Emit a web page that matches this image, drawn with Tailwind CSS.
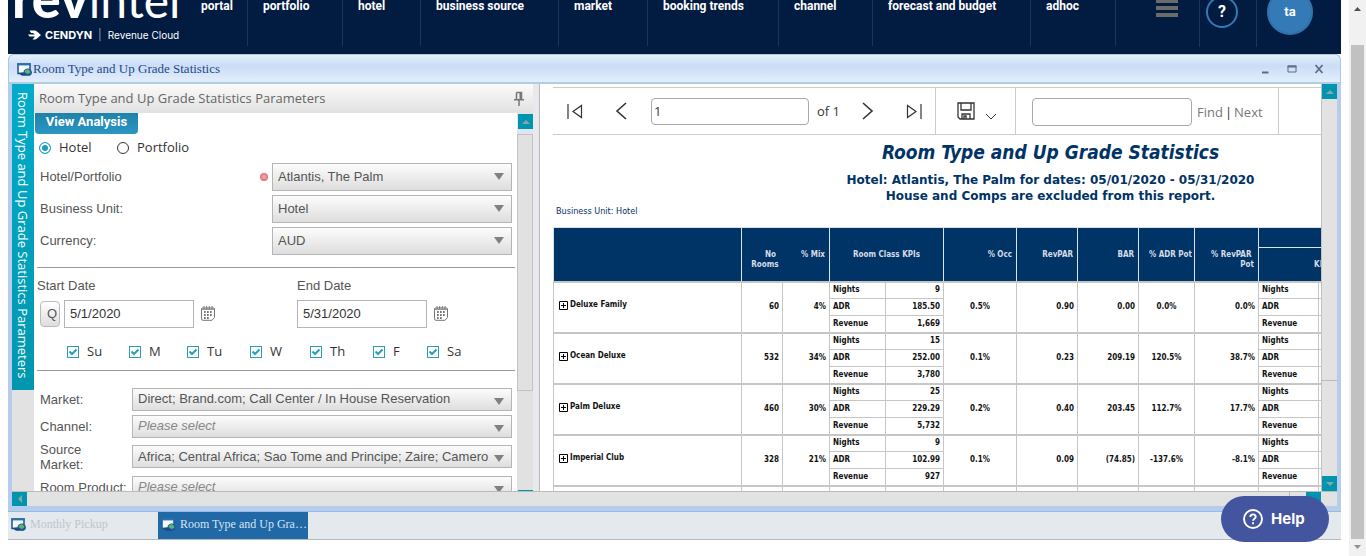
<!DOCTYPE html>
<html lang="en">
<head>
<meta charset="utf-8">
<title>Room Type and Up Grade Statistics</title>
<script src="https://cdn.jsdelivr.net/npm/@tailwindcss/browser@4"></script>
</head>
<body class="relative flex h-screen overflow-hidden bg-white font-['Liberation_Sans',sans-serif] text-[13px] text-[#555]">
<svg class="hidden" aria-hidden="true">
  <symbol id="report" viewBox="0 0 15 13">
    <path d="M1 1h12v9.500H1z" fill="#f4f9fd" stroke="#1f5f9e" stroke-width="1.600"/>
    <path d="M.2.200h13.600v2.200H.2z" fill="#2a6fae"/>
    <path d="M1 10l4 2.800h8L9 9z" fill="#1b4b82"/>
    <path d="M6.500 9.500c0-3 2.500-4 4.500-4s4 2 4 4-1.500 3.300-3.500 3.300z" fill="#1f5c9a"/>
    <path d="M7.500 9c1-3 3.500-3.500 5-1.500l1 2-3 1.500z" fill="#5fb56c"/>
  </symbol>
  <symbol id="calendar" viewBox="0 0 14 15">
    <path d="M1.500 2h11a1 1 0 0 1 1 1v8.500l-2.500 2.800H2a1.500 1.500 0 0 1-1.500-1.500V3a1 1 0 0 1 1-1z" fill="#fff" stroke="#777"/>
    <path d="M1 2.500h12v1.500H1z" fill="#999"/>
    <path d="M3 0v3M5.700 0v3M8.300 0v3M11 0v3" stroke="#777"/>
    <path d="M3 5h1.700v2H3zM6 5h1.700v2H6zM9 5h1.700v2H9zM3 8h1.700v2H3zM6 8h1.700v2H6zM9 8h1.700v2H9zM6 11h1.700v2H6zM3 11h1.700v2H3z" fill="#777"/>
  </symbol>
  <symbol id="check" viewBox="0 0 12 12"><path d="M2.500 5.500l2.500 2.500 4.500-4.500" fill="none" stroke="#2b9db5" stroke-width="2"/></symbol>
  <symbol id="down" viewBox="0 0 10 7"><path d="M0 0h10L5 7z" fill="#808080"/></symbol>
</svg>

<div class="flex min-w-0 flex-1 flex-col px-2">
  <header class="flex h-[54px] shrink-0 overflow-hidden bg-[#021b41] font-['Roboto',sans-serif] text-xs leading-3 font-bold text-white">
    <div class="flex w-[193px] shrink-0 flex-col pl-[4px]">
      <div class="flex h-[22px] items-end overflow-hidden font-['Lato',sans-serif]"><div class="text-[54px] leading-[44px] whitespace-nowrap"><span class="font-black">rev</span><span class="text-[48px] font-normal">intel</span></div></div>
      <div class="mt-[7px] flex h-3 items-center gap-1 pl-4 font-['Inter',sans-serif] text-[11px] leading-3">
        <svg class="h-3 w-[13px]" viewBox="0 0 13 12" fill="#fff"><path d="M1.500 1.500h5c2 0 3 1.500 6.500 4.500-3.500 3-4.500 4.500-6.500 4.500h-2l2.500-3H1.500L0 5.500h7L5 4H3z"/></svg>
        <span class="font-bold">CENDYN</span>
        <span class="px-[2px] font-normal text-slate-400">|</span>
        <span class="text-[10px] font-normal">Revenue Cloud</span>
      </div>
    </div>
    <nav class="flex h-[46px] min-w-0 flex-1 [&>a]:shrink-0 [&>a]:border-r [&>a]:border-[#1f3557] [&>a]:pl-[15px]">
      <a href="#" class="w-[47px] pl-0!">portal</a>
      <a href="#" class="w-[95px]">portfolio</a>
      <a href="#" class="w-[78px]">hotel</a>
      <a href="#" class="w-[138px]">business source</a>
      <a href="#" class="w-[89px]">market</a>
      <a href="#" class="w-[131px]">booking trends</a>
      <a href="#" class="w-[94px]">channel</a>
      <a href="#" class="w-[158px]">forecast and budget</a>
      <a href="#" class="w-[85px]">adhoc</a>
    </nav>
    <div class="flex h-[47px] shrink-0">
      <button aria-label="Menu" class="flex w-[85px] flex-col items-start justify-start gap-[3px] border-r border-[#1f3557] pl-[41px]"><i class="h-[3px] w-[22px] bg-[#6b6b6b]"></i><i class="h-1 w-[22px] bg-[#6b6b6b]"></i><i class="h-1 w-[22px] bg-[#6b6b6b]"></i></button>
      <div class="w-[57px] border-r border-[#1f3557] pl-[6px]"><button class="-mt-1 size-8 rounded-full border-2 border-[#337ab7] text-base">?</button></div>
      <div class="w-[84px] pl-[10px]"><button class="-mt-[11px] size-[46px] rounded-full border-2 border-[#2f72ac] bg-[#337ab7] text-[13px]">ta</button></div>
    </div>
  </header>

  <section class="flex h-[457px] shrink-0 flex-col rounded-t-md bg-[#b7cbec]">
    <div class="flex h-[30px] shrink-0 items-center rounded-t-md border border-[#a9c8e8] border-b-2 border-b-[#b0cde6] bg-linear-to-b from-[#e3effb] via-[#cbdcf6] via-40% to-[#e2effc] pt-px pr-4 pl-2">
      <svg class="h-[13px] w-[15px]"><use href="#report"/></svg>
      <h1 class="pl-px font-['Liberation_Serif',serif] text-[13px] text-[#1d4a8a]">Room Type and Up Grade Statistics</h1>
      <div class="ml-auto flex items-center gap-[17px] text-[#5a6f87]">
        <button aria-label="Minimize" class="size-[10px]"><svg viewBox="0 0 10 10"><path d="M2 7.500h6.500v2H2z" fill="currentColor"/></svg></button>
        <button aria-label="Restore" class="size-[10px]"><svg viewBox="0 0 10 10"><path d="M1 2h8v6H1z" fill="none" stroke="currentColor"/><path d="M.5 1.500h9v2h-9z" fill="currentColor"/></svg></button>
        <button aria-label="Close" class="size-[10px]"><svg viewBox="0 0 10 10"><path d="M1.500 1l7 8M8.500 1l-7 8" fill="none" stroke="currentColor" stroke-width="1.800"/></svg></button>
      </div>
    </div>

    <div class="mx-1 flex h-[407px] shrink-0 bg-[#e2e2e2]">
      <div class="w-[22px] shrink-0"><button class="flex h-[306px] w-full items-start justify-start bg-linear-to-b from-[#02abc8] to-[#0097ae] pt-2 font-['Open_Sans',sans-serif] text-[13px] leading-[22px] whitespace-nowrap text-white [writing-mode:vertical-rl]">Room Type and Up Grade Statistics Parameters</button></div>

      <aside class="flex w-[499px] shrink-0 flex-col bg-white">
        <div class="flex h-[29px] shrink-0 items-center justify-between bg-linear-to-b from-[#fbfbfb] to-[#e1e1e1] pr-2 pl-[5px]">
          <h2 class="font-['Open_Sans',sans-serif] text-[13px] text-[#666]">Room Type and Up Grade Statistics Parameters</h2>
          <button aria-label="Pin" class="h-4 w-3"><svg viewBox="0 0 12 16" fill="none" stroke="#777" stroke-width="1.500"><path d="M3.500 1.500h5v7M3.500 1.500v7M1 8.700h10M6 9v6"/><path d="M7.500 2v6" stroke-width="2"/></svg></button>
        </div>
        <div class="flex min-h-0 flex-1">
          <form class="flex min-w-0 flex-1 flex-col overflow-hidden" onsubmit="return false">
            <button class="ml-px h-[21px] w-[103px] shrink-0 rounded-b-sm bg-linear-to-b from-[#1f82a8] to-[#2a96c2] pb-1 font-['Roboto',sans-serif] font-bold leading-4 text-white">View Analysis</button>
            <div class="flex h-[27px] shrink-0 items-center pl-[5px] font-['Open_Sans',sans-serif] text-[13px] text-[#333]">
              <label class="flex w-[78px] items-center gap-2"><input type="radio" name="scope" checked class="size-3 appearance-none rounded-full border border-[#2b9db5] checked:border-[#2b9db5] checked:bg-[#16a0bc] checked:shadow-[inset_0_0_0_2px_#fff]">Hotel</label>
              <label class="flex items-center gap-2"><input type="radio" name="scope" class="size-3 appearance-none rounded-full border border-[#333]">Portfolio</label>
            </div>
            <div class="grid shrink-0 grid-cols-[1fr_240px] gap-y-1 pt-[2px] pr-[5px] pl-[6px] [&_label]:self-center [&_select]:block [&_select]:h-7 [&_select]:w-full [&_select]:appearance-none [&_select]:border [&_select]:border-[#b5b5b5] [&_select]:bg-linear-to-b [&_select]:from-[#fcfcfc] [&_select]:to-[#dedede] [&_select]:pl-[5px]">
              <label for="hotel" class="flex items-center justify-between pr-1">Hotel/Portfolio<i class="size-2 rounded-full bg-radial from-[#f3b0b0] to-[#d8505c]"></i></label>
              <div class="relative"><select id="hotel"><option>Atlantis, The Palm</option></select><svg class="pointer-events-none absolute top-[10px] right-2 h-[7px] w-[10px]"><use href="#down"/></svg></div>
              <label for="unit">Business Unit:</label>
              <div class="relative"><select id="unit"><option>Hotel</option></select><svg class="pointer-events-none absolute top-[10px] right-2 h-[7px] w-[10px]"><use href="#down"/></svg></div>
              <label for="currency">Currency:</label>
              <div class="relative"><select id="currency"><option>AUD</option></select><svg class="pointer-events-none absolute top-[10px] right-2 h-[7px] w-[10px]"><use href="#down"/></svg></div>
            </div>
            <hr class="mt-3 mr-[2px] ml-[3px] shrink-0 border-[#999]">
            <div class="grid shrink-0 grid-cols-[260px_1fr] pt-2 pl-[3px]">
              <label for="start">Start Date</label>
              <label for="end">End Date</label>
              <div class="flex items-center pt-1 pl-[3px]">
                <button class="h-[26px] w-5 rounded-sm border border-[#bbb] bg-linear-to-b from-white to-[#ddd] pl-1">Q</button>
                <input id="start" value="5/1/2020" class="ml-1 h-7 w-[130px] border border-[#b5b5b5] px-[5px] text-[#333]">
                <svg class="ml-[7px] h-[15px] w-[14px]"><use href="#calendar"/></svg>
              </div>
              <div class="flex items-center pt-1">
                <input id="end" value="5/31/2020" class="h-7 w-[130px] border border-[#b5b5b5] px-[5px] text-[#333]">
                <svg class="ml-[7px] h-[15px] w-[14px]"><use href="#calendar"/></svg>
              </div>
            </div>
            <div class="flex h-[42px] shrink-0 items-center pt-[6px] pl-[33px] font-['Open_Sans',sans-serif] text-[13px] text-[#333] [&_input]:size-3 [&_input]:appearance-none [&_input]:border [&_input]:border-[#2b9db5] [&_label]:flex [&_label]:items-center [&_label]:gap-2 [&_label]:relative [&_svg]:pointer-events-none [&_svg]:absolute [&_svg]:left-0 [&_svg]:size-3">
              <label class="w-[62px]"><input type="checkbox" checked><svg><use href="#check"/></svg>Su</label>
              <label class="w-[58px]"><input type="checkbox" checked><svg><use href="#check"/></svg>M</label>
              <label class="w-[63px]"><input type="checkbox" checked><svg><use href="#check"/></svg>Tu</label>
              <label class="w-[60px]"><input type="checkbox" checked><svg><use href="#check"/></svg>W</label>
              <label class="w-[63px]"><input type="checkbox" checked><svg><use href="#check"/></svg>Th</label>
              <label class="w-[54px]"><input type="checkbox" checked><svg><use href="#check"/></svg>F</label>
              <label><input type="checkbox" checked><svg><use href="#check"/></svg>Sa</label>
            </div>
            <hr class="mr-[2px] ml-[3px] shrink-0 border-[#999]">
            <div class="grid shrink-0 grid-cols-[92px_1fr] items-center pt-[15px] pr-[5px] pl-[6px] [&_label]:leading-[15px] [&_select]:block [&_select]:h-[23px] [&_select]:w-full [&_select]:appearance-none [&_select]:border [&_select]:border-[#b5b5b5] [&_select]:bg-linear-to-b [&_select]:from-[#fcfcfc] [&_select]:to-[#dedede] [&_select]:pr-[22px] [&_select]:pl-[5px]">
              <label for="market">Market:</label>
              <div class="relative py-[2px]"><select id="market"><option>Direct; Brand.com; Call Center / In House Reservation</option></select><svg class="pointer-events-none absolute top-[12px] right-2 h-[7px] w-[10px]"><use href="#down"/></svg></div>
              <label for="channel">Channel:</label>
              <div class="relative py-[2px]"><select id="channel" class="text-[#888] italic"><option>Please select</option></select><svg class="pointer-events-none absolute top-[12px] right-2 h-[7px] w-[10px]"><use href="#down"/></svg></div>
              <label for="source" class="py-[2px]">Source<br>Market:</label>
              <div class="relative py-[2px]"><select id="source"><option>Africa; Central Africa; Sao Tome and Principe; Zaire; Camero</option></select><svg class="pointer-events-none absolute top-[12px] right-2 h-[7px] w-[10px]"><use href="#down"/></svg></div>
              <label for="product" class="whitespace-nowrap">Room Product:</label>
              <div class="relative py-[2px]"><select id="product" class="text-[#888] italic"><option>Please select</option></select><svg class="pointer-events-none absolute top-[12px] right-2 h-[7px] w-[10px]"><use href="#down"/></svg></div>
            </div>
          </form>
          <div class="flex w-4 shrink-0 flex-col bg-[#dfe5ee] pl-px">
            <div class="mt-px flex h-[15px] items-center justify-center bg-[#0095ae]"><svg class="h-1 w-2" viewBox="0 0 8 4"><path d="M0 4h8L4 0z" fill="#8aa5aa"/></svg></div>
            <div class="mt-[5px] -ml-px h-[257px] border border-[#c2c2c2] bg-[#e1e1e1]"></div>
            <div class="-ml-px flex-1 bg-[#e1e1e1]"></div>
            <div class="h-px bg-[#0095ae]"></div>
          </div>
        </div>
      </aside>

      <div class="w-[7px] shrink-0 border-r border-[#b8b8b8] bg-[#e8e9ec]"></div>

      <main class="min-w-0 flex-1 overflow-hidden bg-white pt-[3px] pl-[13px] text-[#333]">
        <div class="flex h-12 w-full items-center border-y border-[#ccc] font-['Open_Sans',sans-serif] [&_svg]:fill-none [&_svg]:stroke-[#333]">
          <button aria-label="First page" class="ml-[14px]"><svg class="h-[15px] w-4" viewBox="0 0 16 15" stroke-width="1.200"><path d="M1 0v15M14.500 1.500v12L6 7.500z"/></svg></button>
          <button aria-label="Previous page" class="ml-8"><svg class="h-[18px] w-3" viewBox="0 0 12 18" stroke-width="1.600"><path d="M11 1L2 9l9 8"/></svg></button>
          <input aria-label="Page" value="1" class="ml-6 h-[27px] w-[158px] rounded border border-[#aaa] px-[2px]">
          <span class="ml-2 w-[37px] pt-px">of 1</span>
          <button aria-label="Next page" class="ml-2"><svg class="h-[18px] w-3" viewBox="0 0 12 18" stroke-width="1.600"><path d="M1 1l9 8-9 8"/></svg></button>
          <button aria-label="Last page" class="ml-8"><svg class="h-[15px] w-4" viewBox="0 0 16 15" stroke-width="1.200"><path d="M15 0v15M1.500 1.500v12L10 7.500z"/></svg></button>
          <div class="ml-[13px] flex h-full w-[81px] items-center border-x border-[#ccc] pl-[21px]">
            <button aria-label="Export" class="flex items-end gap-[10px]"><svg class="size-[18px]" viewBox="0 0 18 18" stroke-width="1.300"><path d="M1 1h16v16H3l-2-2zM4 1v7h10V1M5 17v-5h8v5M7 17v-3h2v3"/></svg><svg class="h-[7px] w-3" viewBox="0 0 12 7"><path d="M1 1l5 5 5-5"/></svg></button>
          </div>
          <input aria-label="Find text" class="ml-4 mt-[2px] h-7 w-40 rounded border border-[#aaa] px-1">
          <div class="ml-[5px] flex h-full w-[82px] items-center gap-[2px] border-r border-[#ccc] pt-1 text-[#777]"><a href="#">Find</a><span class="text-[#333]">|</span><a href="#">Next</a></div>
        </div>

        <div class="w-[995px] font-['DejaVu_Sans',sans-serif] font-bold text-[#003366]">
          <h2 class="pt-[3px] text-center font-['DejaVu_Sans_Condensed','DejaVu_Sans',sans-serif] text-[19px] leading-7 italic">Room Type and Up Grade Statistics</h2>
          <p class="pt-[6px] text-center text-xs leading-4">Hotel: Atlantis, The Palm for dates: 05/01/2020 - 05/31/2020<br>House and Comps are excluded from this report.</p>
          <p class="pl-[3px] font-['DejaVu_Sans_Condensed','DejaVu_Sans',sans-serif] text-[9px] leading-[14px] font-normal">Business Unit: Hotel</p>
        </div>

        <table class="mt-[9px] w-[835px] table-fixed border-collapse font-['DejaVu_Sans_Condensed','DejaVu_Sans',sans-serif] text-[8px] leading-[10px] font-bold text-[#111] [&_td]:border [&_td]:border-[#c6c6c6] [&_td]:px-[3px] [&_td]:py-0 [&_th]:border [&_th]:border-[#d8e2ec] [&_th]:bg-[#003366] [&_th]:px-1 [&_th]:text-[#d5dde6] [&_tr.g]:border-t-2 [&_tr.g]:border-[#c6c6c6]">
          <colgroup><col class="w-[188px]"><col class="w-[41px]"><col class="w-[47px]"><col class="w-[56px]"><col class="w-[58px]"><col class="w-[73px]"><col class="w-[61px]"><col class="w-[61px]"><col class="w-[56px]"><col class="w-[64px]"><col class="w-[60px]"><col></colgroup>
          <thead class="text-right">
            <tr class="h-5"><th rowspan="2"></th><th rowspan="2" class="border-r-0! pt-3">No&nbsp;<br>Rooms</th><th rowspan="2" class="border-l-0! pt-[2px]">% Mix</th><th rowspan="2" colspan="2" class="pt-[2px] text-center">Room Class KPIs</th><th rowspan="2" class="pt-[2px]">% Occ</th><th rowspan="2" class="pt-[2px]">RevPAR</th><th rowspan="2" class="pt-[2px]">BAR</th><th rowspan="2" class="px-[2px]! pt-[2px]">% ADR Pot</th><th rowspan="2" class="pt-3">% RevPAR&nbsp;<br>Pot</th><th colspan="2"></th></tr>
            <tr class="h-[34px]"><th colspan="2" class="pt-[2px] text-center">KPIs</th></tr>
          </thead>
          <tbody id="rows" class="text-right"></tbody>
        </table>
      </main>

      <div class="flex w-4 shrink-0 flex-col border-l border-[#c2c2c2] bg-[#e2e2e2]">
        <div class="flex h-[15px] items-center justify-center bg-[#0095ae]"><svg class="h-1 w-2" viewBox="0 0 8 4"><path d="M0 4h8L4 0z" fill="#8aa5aa"/></svg></div>
        <div class="h-[282px] border-b border-[#bbb]"></div>
        <div class="flex-1"></div>
        <div class="flex h-[15px] items-center justify-center bg-[#0095ae]"><svg class="h-1 w-2" viewBox="0 0 8 4"><path d="M0 0h8L4 4z" fill="#8aa5aa"/></svg></div>
      </div>
    </div>
    <div class="mx-1 flex h-[15px] shrink-0 border-t border-[#bbb] bg-[#e2e2e2]">
      <div class="flex w-[15px] items-center justify-center bg-[#0095ae]"><svg class="h-2 w-1" viewBox="0 0 4 8"><path d="M4 0v8L0 4z" fill="#8aa5aa"/></svg></div>
      <div class="flex-1 border-r border-[#bbb]"></div>
      <div class="mr-4 ml-4 w-[15px] bg-[#0095ae]"></div>
    </div>
  </section>

  <footer class="flex h-[29px] shrink-0 border-t border-b border-t-[#93bfdf] border-b-[#b3bcc4] bg-[#e4e9ed] font-['Liberation_Serif',serif] text-xs">
    <button class="flex w-[150px] items-center gap-1 pb-[3px] pl-[3px] text-[#bcc6cf]"><svg class="h-[13px] w-[15px] shrink-0"><use href="#report"/></svg>Monthly Pickup</button>
    <button class="flex w-[150px] items-center gap-1 bg-[#2168a6] pb-[3px] pl-[3px] text-[#d3e4f3]"><svg class="h-[13px] w-[15px] shrink-0"><use href="#report"/></svg><span class="truncate">Room Type and Up Grade Statistics</span></button>
  </footer>
</div>

<div class="flex w-[17px] shrink-0 flex-col items-center bg-[#f1f1f1]">
  <svg class="mt-[7px] h-1 w-[7px]" viewBox="0 0 7 4"><path d="M0 4h7L3.500 0z" fill="#505050"/></svg>
  <div class="mt-[34px] mb-[6px] w-[13px] flex-1 bg-[#c1c1c1]"></div>
  <svg class="mb-[7px] h-1 w-[7px]" viewBox="0 0 7 4"><path d="M0 0h7L3.500 4z" fill="#909090"/></svg>
</div>

<button class="absolute right-[37px] bottom-[14px] flex h-[46px] w-[108px] items-center gap-2 rounded-full bg-[#43559f] pl-[22px] font-['Inter',sans-serif] text-[15px] font-bold text-white">
  <svg class="size-5" viewBox="0 0 20 20" fill="none" stroke="#fff" stroke-width="1.900"><circle cx="10" cy="10" r="9"/><path d="M7.300 8c0-3.500 5.400-3.500 5.400-.3 0 2-2.700 2-2.700 4.100M10 13.300v1.900"/></svg>Help
</button>

<script>
const data = [
  ['Deluxe Family','60','4%','9','185.50','1,669','0.5%','0.90','0.00','0.0%','0.0%'],
  ['Ocean Deluxe','532','34%','15','252.00','3,780','0.1%','0.23','209.19','120.5%','38.7%'],
  ['Palm Deluxe','460','30%','25','229.29','5,732','0.2%','0.40','203.45','112.7%','17.7%'],
  ['Imperial Club','328','21%','9','102.99','927','0.1%','0.09','(74.85)','-137.6%','-8.1%'],
  ['','','','','','','','','','','']
];
const cell = (t, c = '') => `<td rowspan="3" class="${c}">${t}</td>`;
document.getElementById('rows').innerHTML = data.map(d => {
  const l = d[0] ? ['Nights', 'ADR', 'Revenue'] : ['', '', ''];
  const name = d[0] && `<button class="flex items-center gap-[2px]"><svg class="size-[9px]" viewBox="0 0 9 9" fill="none" stroke="#000"><path d="M.5.500h8v8h-8zM2 4.500h5M4.500 2v5"/></svg>${d[0]}</button>`;
  return `<tr class="g h-[17px]">${cell(name, 'pl-[5px]! pb-1!')}${cell(d[1])}${cell(d[2])}<td class="text-left">${l[0]}</td><td>${d[3]}</td>${cell(d[6], 'text-center')}${cell(d[7])}${cell(d[8])}${cell(d[9], 'text-center')}${cell(d[10])}<td class="text-left">${l[0]}</td><td></td></tr>` +
    `<tr class="h-[17px]"><td class="text-left">${l[1]}</td><td>${d[4]}</td><td class="text-left">${l[1]}</td><td></td></tr>` +
    `<tr class="h-[17px]"><td class="text-left">${l[2]}</td><td>${d[5]}</td><td class="text-left">${l[2]}</td><td></td></tr>`;
}).join('');
</script>
</body>
</html>
